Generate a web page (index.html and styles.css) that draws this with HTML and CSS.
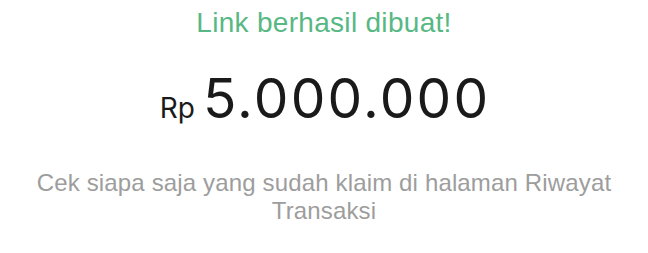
FILE: index.html
```html
<!DOCTYPE html>
<html lang="id">
<head>
<meta charset="utf-8">
<link rel="stylesheet" href="styles.css">
</head>
<body>
<main class="card">
  <p class="title">Link berhasil dibuat!</p>
  <p class="amount"><span class="currency">Rp</span><span class="value">5.000.000</span></p>
  <p class="note">Cek siapa saja yang sudah klaim di halaman Riwayat Transaksi</p>
</main>
</body>
</html>
```
FILE: styles.css
```css
html, body {
  margin: 0;
  padding: 0;
  background: #ffffff;
}
.card {
  width: 648px;
  height: 253px;
  display: flex;
  flex-direction: column;
  align-items: center;
  font-family: "Liberation Sans", Arial, sans-serif;
  padding-top: 6px;
  box-sizing: border-box;
}
.card p {
  margin: 0;
  text-align: center;
}
.title {
  font-size: 28px;
  line-height: 34px;
  color: #58b884;
  letter-spacing: 0.3px;
}
.amount {
  margin-top: 30px !important;
  line-height: 56px;
  color: #1a1a1a;
  display: flex;
  align-items: baseline;
  gap: 8px;
  font-family: Inter, "Liberation Sans", sans-serif;
}
.currency {
  font-size: 28px;
}
.value {
  font-size: 55px;
  letter-spacing: 2.2px;
  margin-right: -2.2px;
}
.note {
  margin-top: 33px !important;
  width: 600px;
  font-size: 24px;
  line-height: 28px;
  color: #9d9d9d;
  letter-spacing: 0.15px;
}
```
